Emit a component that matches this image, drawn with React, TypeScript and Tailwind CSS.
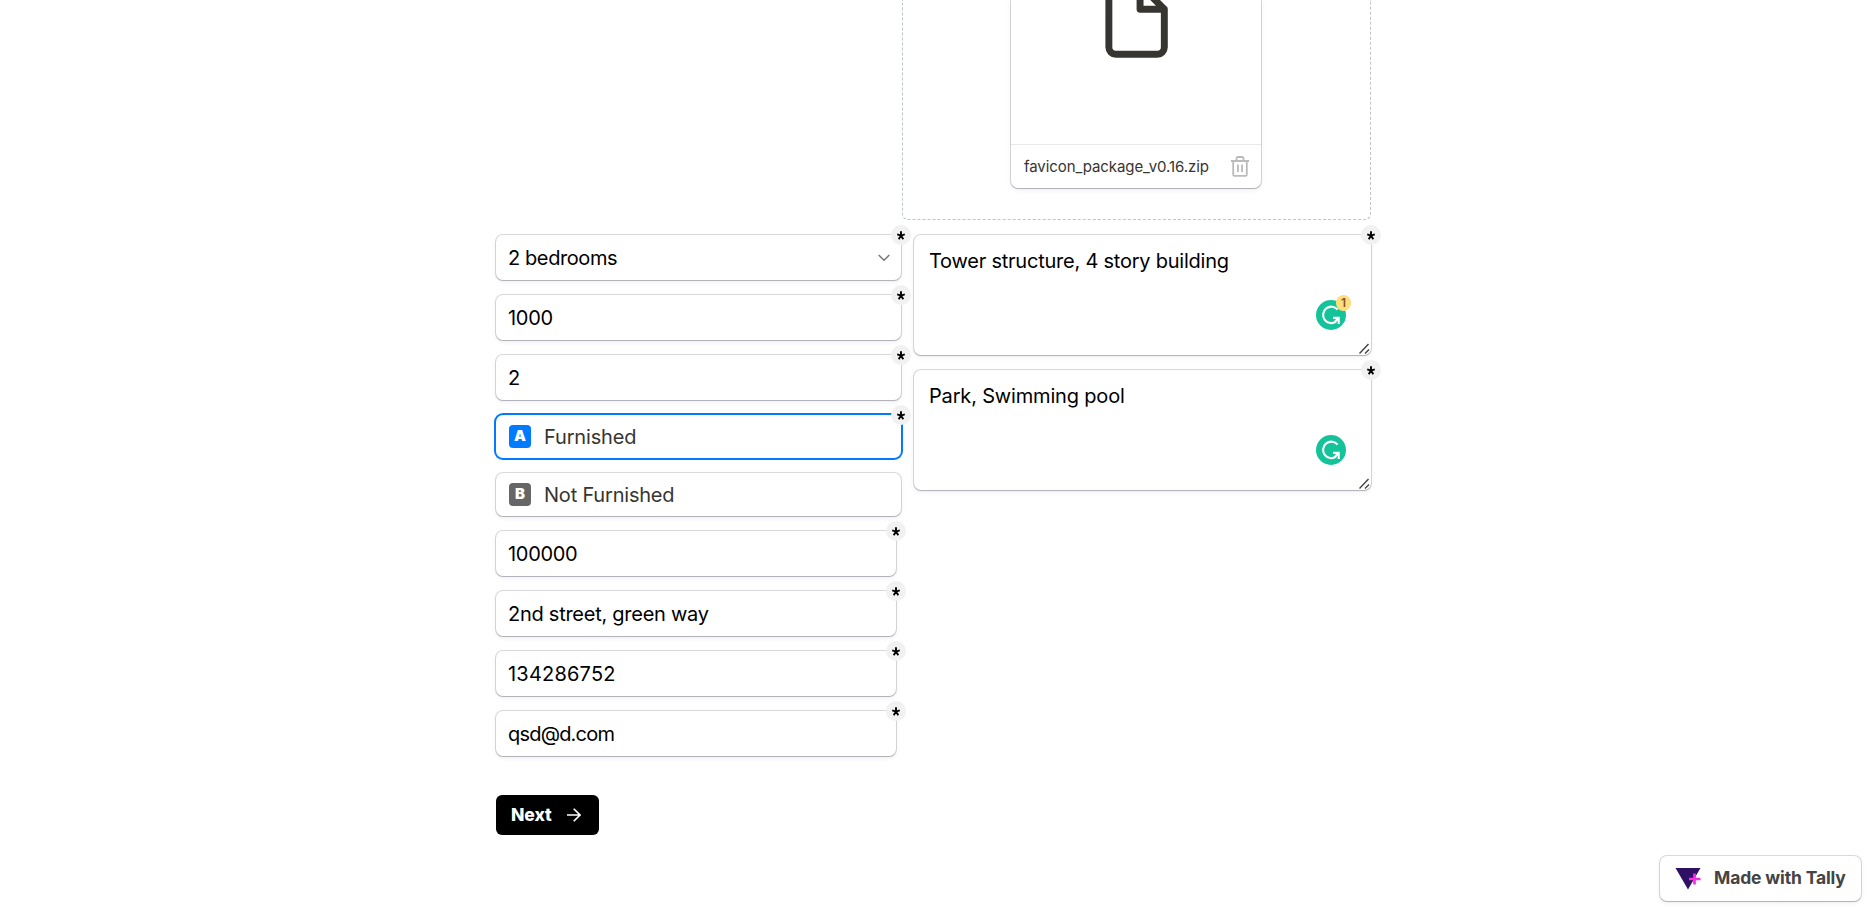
import type { ReactNode } from "react";

const card =
  "rounded-[7px] bg-white shadow-[0_0_0_1px_rgba(60,60,80,0.18),0_1px_1px_rgba(60,60,80,0.22),0_2px_5px_rgba(60,60,80,0.08)]";

function Required() {
  return (
    <span className="absolute -top-[10px] -right-[10px] flex h-5 w-5 items-center justify-center rounded-full bg-[#f1f1f1]">
      <svg width="8" height="9" viewBox="0 0 8 9" stroke="#000" strokeWidth="1.9">
        <path d="M4 4.6V0.3M4 4.6L0.2 3.3M4 4.6L7.8 3.3M4 4.6L1.7 8.2M4 4.6L6.3 8.2" />
      </svg>
    </span>
  );
}

function Field({ children, narrow, icon }: { children: ReactNode; narrow?: boolean; icon?: ReactNode }) {
  return (
    <div
      className={`relative flex h-[45px] items-center justify-between pr-[11px] pl-[12px] text-[20px] text-black ${card} ${narrow ? "w-[400px]" : "w-[405px]"}`}
    >
      {children}
      {icon}
      <Required />
    </div>
  );
}

function Grammar({ count }: { count?: number }) {
  return (
    <div className="absolute right-[25px] bottom-[25px] h-[30px] w-[30px]">
      <svg width="30" height="30" viewBox="0 0 30 30" fill="none">
        <circle cx="15" cy="15" r="15" fill="#15c39a" />
        <path d="M21.6 9.6A8.2 8.2 0 1 0 20 21.6" stroke="#fff" strokeWidth="2.1" />
        <path d="M17 17.9H22.7V24M22.5 18L18.8 22" stroke="#fff" strokeWidth="2.1" />
      </svg>
      {count !== undefined && (
        <span className="absolute -top-[5px] -right-[5px] flex h-4 w-[15px] items-center justify-center rounded-full bg-[#ffde7f] text-[12px] leading-none font-semibold text-[#8a5520]">
          {count}
        </span>
      )}
    </div>
  );
}

function Area({ children, count }: { children: ReactNode; count?: number }) {
  return (
    <div className={`relative h-[120px] w-[457px] px-[15px] pt-[11px] text-[20px] leading-[30px] text-black ${card}`}>
      {children}
      <Grammar count={count} />
      <svg className="absolute right-[1px] bottom-[1px]" width="11" height="11" viewBox="0 0 11 11" stroke="#444" strokeWidth="1.4">
        <path d="M0.5 10.5L9.5 1M6 10.5L10 6.5" />
      </svg>
      <Required />
    </div>
  );
}

export default function App() {
  return (
    <div className="relative h-[910px] w-full overflow-hidden bg-white font-['Inter',sans-serif] font-normal">
      <div className="ml-[496px] w-[875px]">
        <div className="ml-auto flex h-[220px] w-[469px] justify-center rounded-b-[6px] border border-t-0 border-dashed border-[#bfc3cd]">
          <div className={`mr-px flex h-[188px] w-[250px] flex-col rounded-t-none ${card}`}>
            <div className="flex h-[144px] justify-center pl-px">
              <svg className="-mt-[22px] shrink-0" width="83.2" height="83.2" viewBox="0 0 24 24" fill="none" stroke="#37352f" strokeWidth="2" strokeLinecap="round" strokeLinejoin="round">
                <path d="M13 2H6a2 2 0 0 0-2 2v16a2 2 0 0 0 2 2h12a2 2 0 0 0 2-2V9zM13 2v7h7" />
              </svg>
            </div>
            <div className="flex h-[44px] items-center justify-between border-t border-[#e9e9eb] pr-[12px] pl-[13px] text-[15px] tracking-[-0.08px] text-[#37352f]">
              <span className="whitespace-nowrap pt-px">favicon_package_v0.16.zip</span>
              <svg width="18" height="21" viewBox="0 0 18 21" fill="none" stroke="#bababa" strokeWidth="1.8">
                <path d="M0 5H18M2.2 5V18.3A1.6 1.6 0 0 0 3.8 19.9H14.2A1.6 1.6 0 0 0 15.8 18.3V5M5.5 5V2.5A1.5 1.5 0 0 1 7 1H11A1.5 1.5 0 0 1 12.5 2.5V5M7 8.5V16M11 8.5V16" />
              </svg>
            </div>
          </div>
        </div>

        <div className="mt-[15px] flex gap-[13px]">
          <div className="flex w-[405px] flex-col gap-[15px]">
            <Field
              icon={
                <svg width="12" height="8" viewBox="0 0 12 8" fill="none" stroke="#777" strokeWidth="1.5">
                  <path d="M0.7 1L6 6.3L11.3 1" />
                </svg>
              }
            >
              <span className="tracking-[-0.4px]">2 bedrooms</span>
            </Field>
            <Field><span className="tracking-[-0.3px]">1000</span></Field>
            <Field><span>2</span></Field>
            <div className="relative flex h-[43px] items-center rounded-[7px] bg-white pl-[13px] text-[20px] text-[#37352f] shadow-[0_0_0_2px_#007aff]">
              <span className="mr-[13px] flex h-[23px] w-[22px] items-center justify-center rounded-[4px] bg-[#007aff] text-[15px] font-black text-white">A</span>
              <span className="tracking-[-0.15px]">Furnished</span>
              <Required />
            </div>
            <div className={`flex h-[43px] items-center pl-[13px] text-[20px] text-[#37352f] ${card}`}>
              <span className="mr-[13px] flex h-[23px] w-[22px] items-center justify-center rounded-[4px] bg-[#666] text-[15px] font-black text-white">B</span>
              <span className="tracking-[-0.2px]">Not Furnished</span>
            </div>
            <Field narrow><span className="tracking-[-0.3px]">100000</span></Field>
            <Field narrow><span className="tracking-[-0.26px]">2nd street, green way</span></Field>
            <Field narrow><span className="tracking-[0.2px]">134286752</span></Field>
            <Field narrow><span className="tracking-[-0.8px]">qsd@d.com</span></Field>
          </div>
          <div className="flex flex-col gap-[15px]">
            <Area count={1}><span className="tracking-[-0.23px]">Tower structure, 4 story building</span></Area>
            <Area><span className="tracking-[-0.17px]">Park, Swimming pool</span></Area>
          </div>
        </div>

        <button className="mt-[39px] flex h-[40px] w-[103px] items-center justify-between rounded-[6px] bg-black pr-[18px] pl-[15px] text-[17.5px] font-extrabold text-white">
          <span className="tracking-[-0.1px]">Next</span>
          <svg width="14" height="14" viewBox="0 0 14 14" fill="none" stroke="#fff" strokeWidth="1.6">
            <path d="M0 7H13M6.7 0.7L13 7L6.7 13.3" />
          </svg>
        </button>
      </div>

      <div className={`absolute right-[10px] bottom-[9px] flex h-[45px] w-[201px] items-center pl-[15px] text-[17.5px] font-bold text-[#444] ${card}`}>
        <svg className="mr-[13px]" width="26" height="22" viewBox="0 0 26 22">
          <path d="M0.5 0H25.5L13 21.5Z" fill="#2e1065" />
          <path d="M19.5 5.5V16.5M14 11H25.5" stroke="#f52fe0" strokeWidth="2.7" />
        </svg>
        <span className="whitespace-nowrap tracking-[-0.15px]">Made with Tally</span>
      </div>
    </div>
  );
}
